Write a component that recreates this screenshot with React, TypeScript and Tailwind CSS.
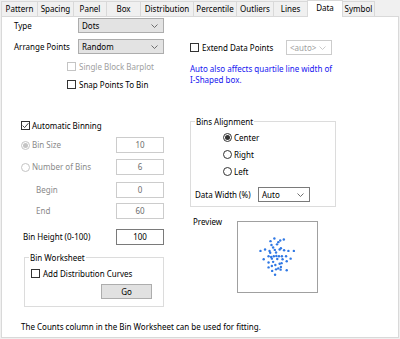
import type { ReactNode } from 'react';

const tabs = [
  { name: 'Pattern', w: 'w-[37px]' },
  { name: 'Spacing', w: 'w-[37px]' },
  { name: 'Panel', w: 'w-[34px]' },
  { name: 'Box', w: 'w-[35px]' },
  { name: 'Distribution', w: 'w-[54px]' },
  { name: 'Percentile', w: 'w-[44px]' },
  { name: 'Outliers', w: 'w-[38px]' },
  { name: 'Lines', w: 'w-[35px]' },
  { name: 'Data', w: 'w-[36px]', active: true },
  { name: 'Symbol', w: 'w-[33px]' },
];

const dots: [number, number][] = [
  [37.3, 17], [47, 18], [33.3, 19.7], [43.3, 19], [41.3, 20.7], [34.3, 23.7], [40, 23],
  [36, 26.3], [44, 27], [23, 29.7], [27.7, 28.3], [32.3, 29.7], [37.7, 28.7], [42.7, 28.3],
  [47.3, 29], [51.7, 29.7], [57.3, 29.7], [33, 31.7], [39, 31.3], [31.3, 35.3], [34, 36],
  [36.7, 35.3], [39.3, 35], [42, 35.3], [45, 35.3], [49.3, 35.3], [26.3, 38.3], [34.7, 37.7],
  [40.3, 38], [45.7, 38.3], [54, 37.7], [31.3, 41.7], [36, 41], [42.7, 43], [44.7, 42.3],
  [50, 40.3], [31.3, 46.7], [34.7, 45.3], [38.3, 44.3], [41.3, 47.7], [44, 46.3], [50, 49.7],
  [35, 50.3], [39, 48.7], [43.7, 49], [38, 54.3],
];

const Chevron = ({ disabled }: { disabled?: boolean }) => (
  <svg width="7" height="4" viewBox="0 0 7 4" className="shrink-0">
    <polyline
      points="0.5,0.5 3.5,3.5 6.5,0.5"
      fill="none"
      stroke={disabled ? '#c4c4c4' : '#606060'}
      strokeWidth="0.9"
    />
  </svg>
);

const Select = ({
  value,
  className,
  variant = 'button',
}: {
  value: string;
  className: string;
  variant?: 'button' | 'edit' | 'disabled';
}) => {
  const look =
    variant === 'button'
      ? 'bg-[#e3e3e3] border-[#adadad] text-black'
      : variant === 'edit'
        ? 'bg-white border-[#7a7a7a] text-black'
        : 'bg-white border-[#cccccc] text-[#a0a0a0]';
  return (
    <div className={`flex items-center justify-between border pl-[3px] pr-[5px] leading-none ${look} ${className}`}>
      <span>{value}</span>
      <Chevron disabled={variant === 'disabled'} />
    </div>
  );
};

const Checkbox = ({ checked, disabled }: { checked?: boolean; disabled?: boolean }) => (
  <span
    className={`flex h-[9px] w-[9px] shrink-0 items-center justify-center border bg-white ${
      disabled ? 'border-[#c4c4c4]' : 'border-[#333333]'
    }`}
  >
    {checked ? (
      <svg width="7" height="7" viewBox="0 0 7 7">
        <polyline points="0.6,3.6 2.6,5.6 6.4,1.2" fill="none" stroke="#333" strokeWidth="0.9" />
      </svg>
    ) : null}
  </span>
);

const Radio = ({ checked, disabled }: { checked?: boolean; disabled?: boolean }) => (
  <span
    className={`flex h-[9px] w-[9px] shrink-0 items-center justify-center rounded-full border bg-white ${
      disabled ? 'border-[#c4c4c4]' : 'border-[#333333]'
    }`}
  >
    {checked ? (
      <span className={`h-[5px] w-[5px] rounded-full ${disabled ? 'bg-[#c4c4c4]' : 'bg-[#333333]'}`} />
    ) : null}
  </span>
);

const TextBox = ({ value, disabled }: { value: string; disabled?: boolean }) => (
  <div
    className={`ml-auto flex h-[16px] w-[48px] items-center justify-center border bg-white leading-none ${
      disabled ? 'border-[#cccccc] text-[#6d6d6d]' : 'border-[#7a7a7a] text-black'
    }`}
  >
    {value}
  </div>
);

const Group = ({ title, className, children }: { title: string; className: string; children: ReactNode }) => (
  <div className={`flex flex-col border border-[#dcdcdc] ${className}`}>
    <span className="-mt-[6px] ml-[4px] block w-fit bg-white px-px leading-[11px]">{title}</span>
    {children}
  </div>
);

export default function App() {
  return (
    <div
      className="h-[339px] w-[400px] overflow-hidden bg-[#f0f0f0] text-[8px] text-black"
      style={{ fontFamily: '"Noto Sans", "Liberation Sans", sans-serif' }}
    >
      <div className="flex h-[16px] items-start pl-[1px]">
        {tabs.map((tab) =>
          tab.active ? (
            <div
              key={tab.name}
              className={`relative z-10 -ml-px flex h-[17px] items-center justify-center border border-b-0 border-[#d9d9d9] bg-white pb-[2px] ${tab.w}`}
            >
              {tab.name}
            </div>
          ) : (
            <div
              key={tab.name}
              className={`-ml-px mt-[1px] flex h-[15px] items-center justify-center border border-b-0 border-[#d9d9d9] bg-[#f0f0f0] first:ml-0 ${tab.w}`}
            >
              {tab.name}
            </div>
          ),
        )}
      </div>

      <div className="ml-[1px] flex h-[322px] w-[398px] flex-col border border-[#d9d9d9] bg-white">
        <div className="flex items-start">
          <div className="ml-[12px] flex w-[150px] flex-col">
            <div className="mt-[1px] flex h-[15px] items-center">
              <span className="w-[64px]">Type</span>
              <Select value="Dots" className="h-[15px] w-[86px]" />
            </div>
            <div className="mt-[6px] flex h-[15px] items-center">
              <span className="w-[64px]">Arrange Points</span>
              <Select value="Random" className="h-[15px] w-[86px]" />
            </div>
            <div className="mt-[8px] flex h-[9px] items-center gap-[3px] pl-[53px] text-[#a0a0a0]">
              <Checkbox disabled />
              <span className="whitespace-nowrap">Single Block Barplot</span>
            </div>
            <div className="mt-[9px] flex h-[9px] items-center gap-[3px] pl-[53px]">
              <Checkbox />
              <span className="whitespace-nowrap">Snap Points To Bin</span>
            </div>
          </div>

          <div className="ml-[26px] flex w-[142px] flex-col">
            <div className="mt-[23px] flex h-[15px] items-center gap-[3px]">
              <Checkbox />
              <span className="whitespace-nowrap">Extend Data Points</span>
              <Select value="<auto>" variant="disabled" className="ml-auto h-[15px] w-[46px]" />
            </div>
            <p className="mt-[8px] whitespace-nowrap leading-[11px] text-[#1515f0]">
              Auto also affects quartile line width of
              <br />
              I-Shaped box.
            </p>
          </div>
        </div>

        <div className="mt-[32px] flex items-start">
          <div className="ml-[19px] flex w-[143px] flex-col">
            <div className="flex h-[9px] items-center gap-[2px]">
              <Checkbox checked />
              <span>Automatic Binning</span>
            </div>
            <div className="mt-[7px] flex h-[16px] items-center gap-[2px] text-[#8a8a8a]">
              <Radio checked disabled />
              <span>Bin Size</span>
              <TextBox value="10" disabled />
            </div>
            <div className="mt-[6px] flex h-[16px] items-center gap-[2px] text-[#8a8a8a]">
              <Radio disabled />
              <span>Number of Bins</span>
              <TextBox value="6" disabled />
            </div>
            <div className="mt-[7px] flex h-[16px] items-center pl-[15px] text-[#8a8a8a]">
              <span>Begin</span>
              <TextBox value="0" disabled />
            </div>
            <div className="mt-[5px] flex h-[16px] items-center pl-[15px] text-[#8a8a8a]">
              <span>End</span>
              <TextBox value="60" disabled />
            </div>
            <div className="mt-[10px] flex h-[16px] items-center pl-[2px]">
              <span>Bin Height (0-100)</span>
              <TextBox value="100" />
            </div>
            <Group title="Bin Worksheet" className="ml-[3px] mt-[12px] h-[50px] w-[140px]">
              <div className="ml-[6px] mt-[6px] flex h-[9px] items-center gap-[3px]">
                <Checkbox />
                <span className="whitespace-nowrap">Add Distribution Curves</span>
              </div>
              <div className="ml-[76px] mt-[6px] flex h-[15px] w-[51px] items-center justify-center border border-[#adadad] bg-[#e1e1e1] leading-none">
                Go
              </div>
            </Group>
          </div>

          <div className="ml-[26px] flex flex-col">
            <Group title="Bins Alignment" className="h-[86px] w-[146px]">
              <div className="ml-[32px] mt-[6px] flex h-[9px] items-center gap-[2px]">
                <Radio checked />
                <span>Center</span>
              </div>
              <div className="ml-[32px] mt-[8px] flex h-[9px] items-center gap-[2px]">
                <Radio />
                <span>Right</span>
              </div>
              <div className="ml-[32px] mt-[8px] flex h-[9px] items-center gap-[2px]">
                <Radio />
                <span>Left</span>
              </div>
              <div className="ml-[4px] mt-[11px] flex h-[15px] items-center">
                <span className="w-[63px] whitespace-nowrap">Data Width (%)</span>
                <Select value="Auto" variant="edit" className="h-[15px] w-[52px]" />
              </div>
            </Group>
            <div className="ml-[3px] mt-[9px] flex items-start">
              <span className="w-[44px] leading-[11px]">Preview</span>
              <svg width="81" height="72" viewBox="0 0 81 72" className="mt-[5px] border border-[#a0a0a0]">
                {dots.map(([x, y], i) => (
                  <circle key={i} cx={x} cy={y} r="1.25" fill="#2f78e4" />
                ))}
              </svg>
            </div>
          </div>
        </div>

        <p className="ml-[19px] mt-[14px] whitespace-nowrap leading-[11px]">
          The Counts column in the Bin Worksheet can be used for fitting.
        </p>
      </div>
    </div>
  );
}
